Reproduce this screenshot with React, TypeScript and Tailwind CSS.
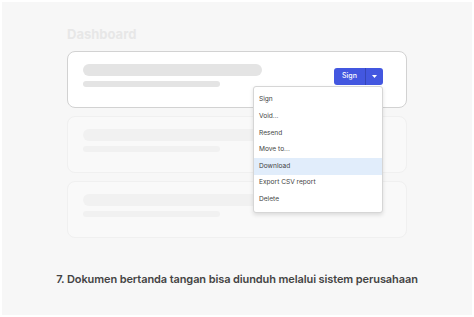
const menuItems = ['Sign', 'Void...', 'Resend', 'Move to...', 'Download', 'Export CSV report', 'Delete']

function Skeleton({ faded }: { faded?: boolean }) {
  return (
    <div className="flex flex-col">
      <div className={`h-[12px] w-[179px] rounded-full ${faded ? 'bg-[#f1f1f1]' : 'bg-[#e4e4e4]'}`} />
      <div className={`mt-[5px] h-[6px] w-[137px] rounded-full ${faded ? 'bg-[#f1f1f1]' : 'bg-[#e4e4e4]'}`} />
    </div>
  )
}

export default function App() {
  return (
    <div
      className="h-[317px] w-[474px] border-2 border-white bg-[#f7f7f7]"
      style={{ fontFamily: 'Inter, "Noto Sans", sans-serif' }}
    >
      <div className="relative pl-[65px] pt-[24px]">
        <h1 className="text-[13px] font-bold leading-[16px] text-[#e7e7e7]">Dashboard</h1>

        <div className="mt-[9px] flex h-[57px] w-[340px] items-start justify-between rounded-[8px] border border-[#d2d2d2] bg-white pl-[15px] pr-[23px] pt-[12px]">
          <Skeleton />
          <div className="mt-[4px] flex h-[17px] overflow-hidden rounded-[3px] bg-[#4357e0]">
            <span className="flex w-[31px] items-center justify-center text-[7px] font-medium text-white">Sign</span>
            <span className="w-px bg-[#3546b8]" />
            <span className="flex w-[17px] items-center justify-center">
              <svg width="5" height="3" viewBox="0 0 5 3">
                <path d="M0 0h5L2.5 3z" fill="#fff" />
              </svg>
            </span>
          </div>
        </div>

        <div className="mt-[8px] flex h-[57px] w-[340px] items-start rounded-[8px] border border-[#f0f0f0] bg-[#f9f9f9] pl-[15px] pt-[12px]">
          <Skeleton faded />
        </div>

        <div className="mt-[8px] flex h-[57px] w-[340px] items-start rounded-[8px] border border-[#f0f0f0] bg-[#f9f9f9] pl-[15px] pt-[12px]">
          <Skeleton faded />
        </div>

        <div className="absolute left-[251px] top-[84px] w-[130px] rounded-[3px] border border-[#d6d6d6] bg-white pb-[4px] pt-[5px] shadow-[0_2px_4px_rgba(0,0,0,0.12)]">
          {menuItems.map((item) => (
            <div
              key={item}
              className={`flex h-[16.6px] items-center px-[5px] text-[6.6px] text-[#444] ${item === 'Download' ? 'bg-[#e1edfb]' : ''}`}
            >
              {item}
            </div>
          ))}
        </div>
      </div>

      <p className="mt-[33px] text-center text-[11px] font-semibold tracking-[-0.1px] text-[#444]">
        7. Dokumen bertanda tangan bisa diunduh melalui sistem perusahaan
      </p>
    </div>
  )
}
